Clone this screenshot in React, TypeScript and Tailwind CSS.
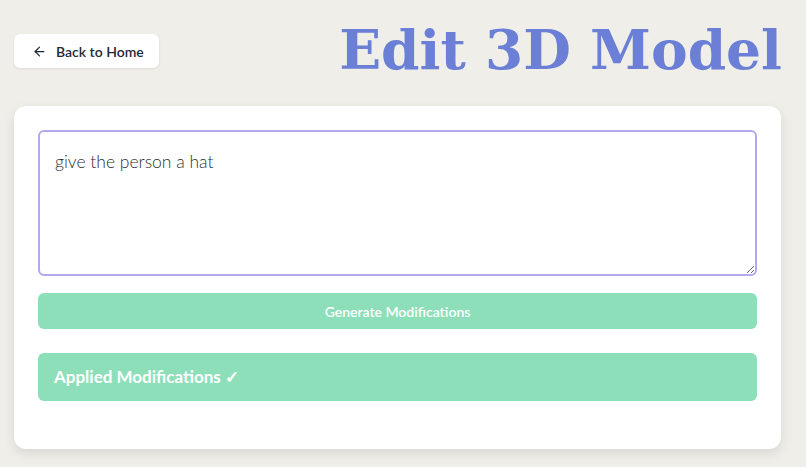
import React from "react";
import { ArrowLeft } from "lucide-react";

export default function App() {
  return (
    <div
      className="w-[806px] h-[467px] bg-[#efeee9] pl-[14px] pr-[25px] overflow-hidden"
      style={{ fontFamily: "Lato, 'Open Sans', sans-serif" }}
    >
      <div className="flex items-center justify-between h-[106px] pb-[4px]">
        <button className="flex items-center gap-[9px] h-[34px] w-[145px] pl-[18px] bg-white rounded-[6px] shadow-[0_1px_3px_rgba(0,0,0,0.08)] text-[14px] font-semibold text-[#1f2937]">
          <ArrowLeft size={15} strokeWidth={2} />
          <span>Back to Home</span>
        </button>
        <h1
          className="text-[55px] font-bold text-[#6a7fd5] leading-none mr-[-1px] mt-[-4px]"
          style={{ fontFamily: "'DejaVu Serif', Georgia, serif" }}
        >
          Edit 3D Model
        </h1>
      </div>
      <div className="bg-white rounded-[12px] shadow-[0_4px_12px_rgba(0,0,0,0.1)] p-[24px] pb-[48px]">
        <textarea
          className="block w-full h-[146px] border-2 border-[#b3a7ee] rounded-[6px] px-[15px] py-[17px] text-[17.5px] font-light text-[#2d2d2d] resize-y outline-none"
          defaultValue="give the person a hat"
        />
        <button className="mt-[17px] w-full h-[36px] rounded-[6px] bg-[#8ddfba] text-white text-[14px] font-semibold">
          Generate Modifications
        </button>
        <div className="mt-[24px] h-[48px] rounded-[6px] bg-[#8ddfba] flex items-center px-[16px] text-white text-[17px] font-bold">
          Applied Modifications ✓
        </div>
      </div>
    </div>
  );
}
